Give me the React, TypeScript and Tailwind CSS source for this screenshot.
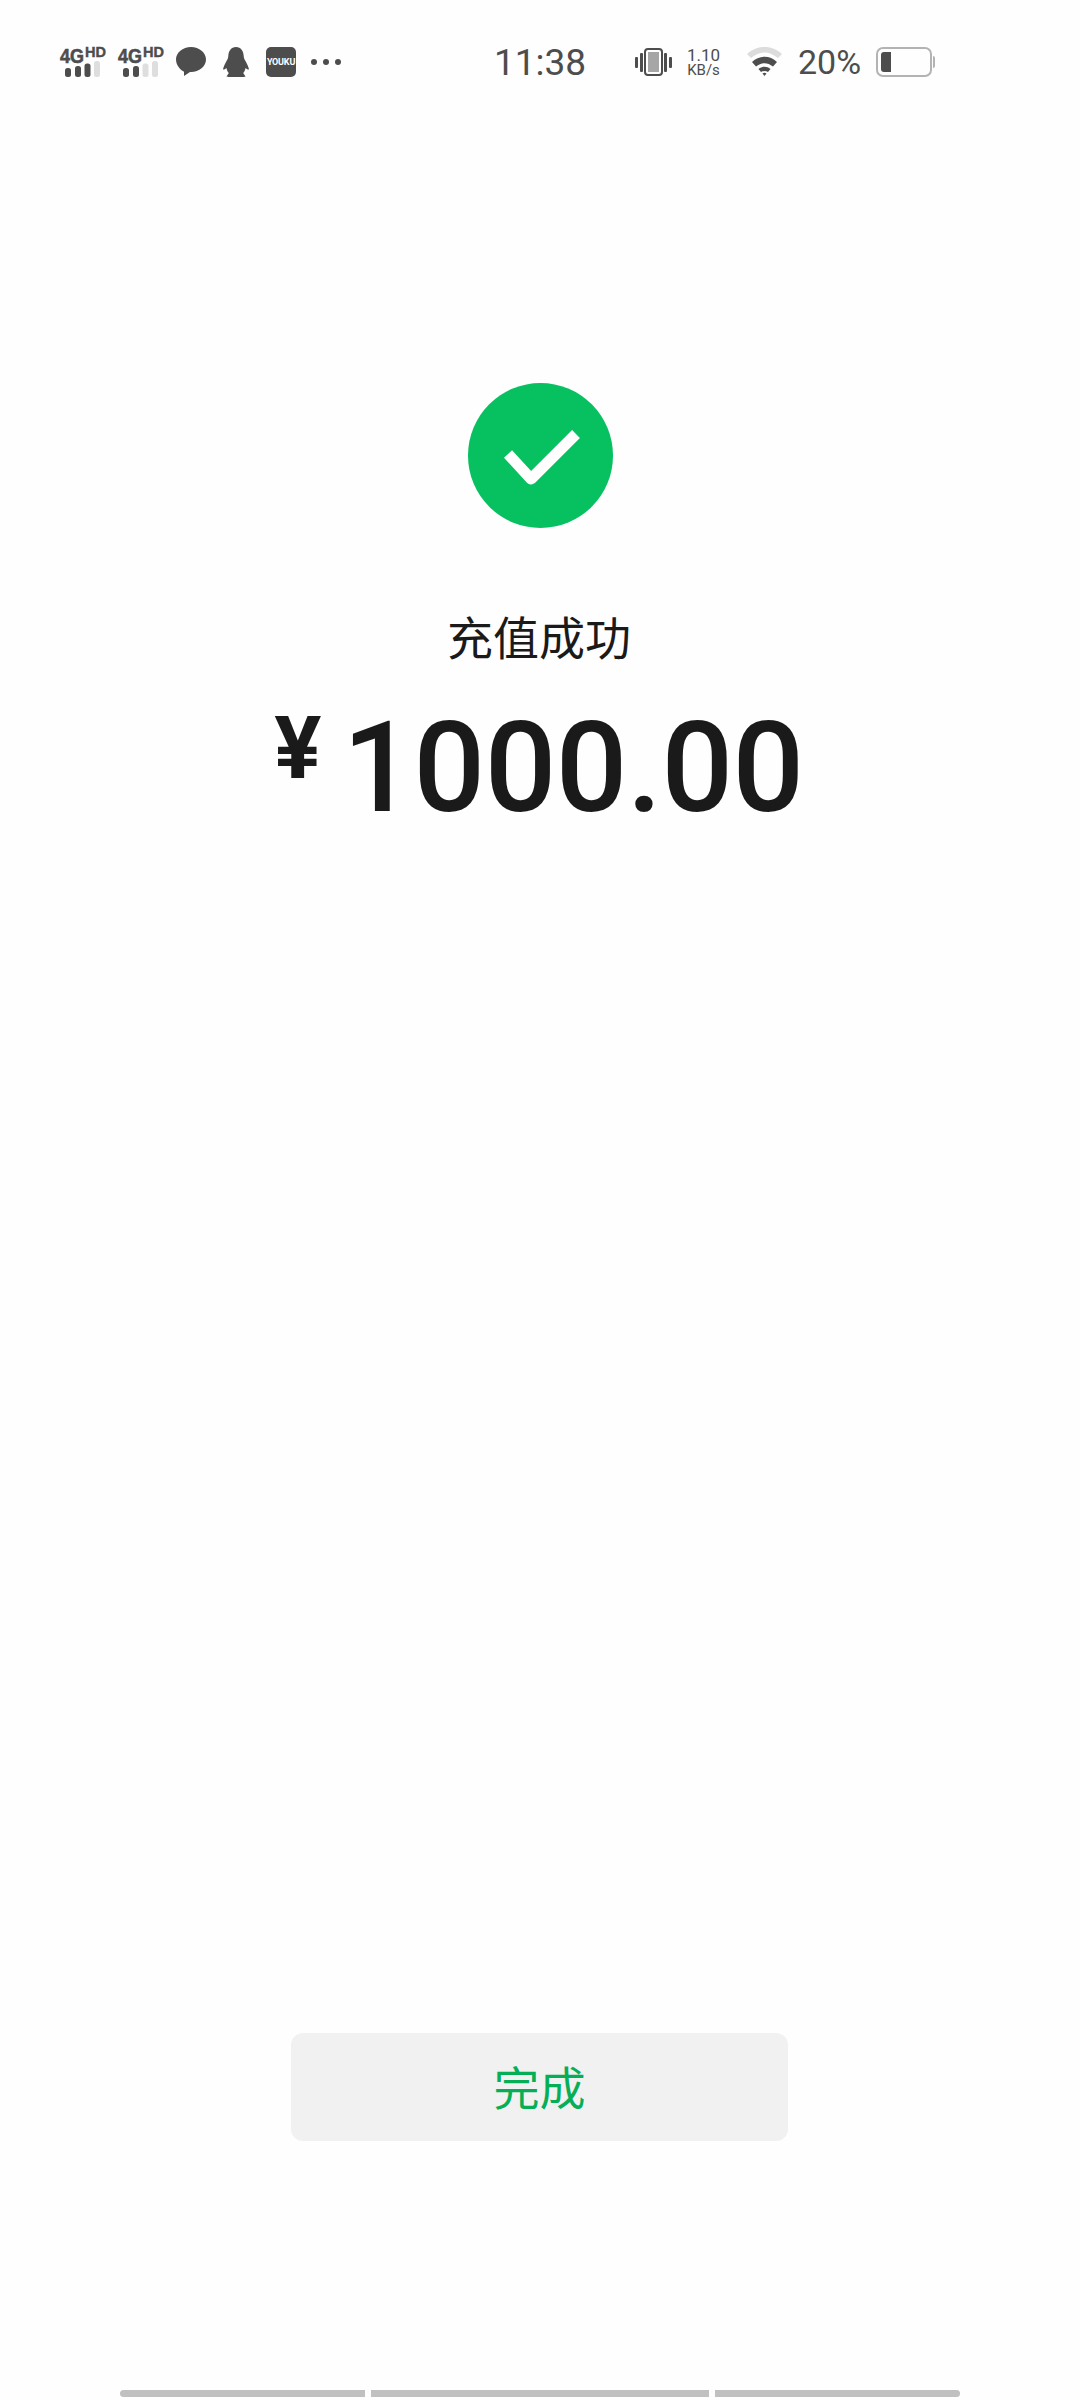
import React from "react";

const sans = "font-['Roboto','Noto_Sans_CJK_SC',sans-serif]";

function Signal({ filled }: { filled: number }) {
  const bars = [
    { x: 5, y: 21, h: 9 },
    { x: 15, y: 19, h: 11 },
    { x: 24.5, y: 16.5, h: 13.5 },
    { x: 34, y: 14, h: 16 },
  ];
  return (
    <svg className="overflow-visible" width="46" height="30" viewBox="0 0 46 30">
      <text x="0" y="15.500" fontFamily="Liberation Sans" fontWeight="700" fontSize="21" textLength="24" lengthAdjust="spacingAndGlyphs" fill="#4d4d4d" stroke="#4d4d4d" strokeWidth="0.6">4G</text>
      <text x="25" y="10" fontFamily="Liberation Sans" fontWeight="700" fontSize="14" textLength="21" lengthAdjust="spacingAndGlyphs" fill="#4d4d4d" stroke="#4d4d4d" strokeWidth="0.4">HD</text>
      {bars.map((b, i) => (
        <rect key={i} x={b.x} y={b.y} width="6" height={b.h} rx="2.5" fill={i < filled ? "#4d4d4d" : "#dedede"} />
      ))}
    </svg>
  );
}

function StatusBar() {
  return (
    <div className={`flex items-center h-[30px] mt-[47px] pl-[60px] text-[#4d4d4d] ${sans}`}>
      <Signal filled={3} />
      <div className="ml-[12px]">
        <Signal filled={2} />
      </div>
      {/* message */}
      <svg className="ml-[12px]" width="30" height="30" viewBox="0 0 30 30">
        <path d="M15 0C6.700 0 0 5.600 0 12.500c0 6.300 5.200 11 8 12.200L8 29l6-4h1c8.300 0 15-5.600 15-12.500S23.300 0 15 0z" fill="#4d4d4d" />
      </svg>
      {/* qq */}
      <svg className="ml-[17px]" width="26" height="30" viewBox="0 0 26 30">
        <path d="M13 0c5 0 7.500 4 7.700 9 .1 2 .6 3 1.800 5 1.500 2.700 3.300 6.500 3.500 8.500-1 .3-2.700-.6-3.500-1.500-.3 2-1 3.700-2.300 5l2.300 3.500c-.5.3-1.500.5-3 .5H6.500c-1.500 0-2.500-.2-3-.5L5.800 26c-1.300-1.300-2-3-2.300-5-.8.9-2.500 1.800-3.500 1.500.2-2 2-5.800 3.500-8.500 1.200-2 1.700-3 1.800-5C5.500 4 8 0 13 0z" fill="#4d4d4d" />
      </svg>
      {/* youku */}
      <div className="ml-[17px] w-[30px] h-[30px] rounded-[5px] bg-[#4d4d4d] flex items-center justify-center text-white text-[9px] font-bold leading-none tracking-[-0.2px]">
        YOUKU
      </div>
      <div className="ml-[15px] flex gap-[6px]">
        <span className="w-[6px] h-[6px] rounded-full bg-[#4d4d4d]" />
        <span className="w-[6px] h-[6px] rounded-full bg-[#4d4d4d]" />
        <span className="w-[6px] h-[6px] rounded-full bg-[#4d4d4d]" />
      </div>
      <span className="ml-[153px] w-[93px] text-[37px] leading-none whitespace-nowrap">11:38</span>
      {/* vibrate */}
      <svg className="ml-[48px]" width="37" height="28" viewBox="0 0 37 28">
        <rect x="0" y="9" width="3" height="11" rx="1" fill="#4d4d4d" />
        <rect x="5" y="5" width="3" height="19" rx="1" fill="#4d4d4d" />
        <rect x="29" y="5" width="3" height="19" rx="1" fill="#4d4d4d" />
        <rect x="34" y="9" width="3" height="11" rx="1" fill="#4d4d4d" />
        <rect x="10" y="1" width="17" height="26" rx="3" fill="#fff" stroke="#4d4d4d" strokeWidth="2" />
        <rect x="13" y="4" width="11" height="20" fill="#a6a6a6" />
      </svg>
      <div className="ml-[15px] flex flex-col items-center w-[33px] text-[17px] leading-[16px]">
        <span>1.10</span>
        <span className="text-[15px] leading-[15px]">KB/s</span>
      </div>
      {/* wifi */}
      <svg className="ml-[27px]" width="35" height="30" viewBox="0 0 35 30">
        <path d="M0 7C10-2.500 25-2.500 35 7l-4 4C22 3.500 13 3.500 4 11z" fill="#dcdcdc" />
        <path d="M5 15c7-7 18-7 25 0l-4 4.500c-5.500-4.500-11.500-4.500-17 0z" fill="#4d4d4d" />
        <path d="M11.500 22c3.500-3 8.500-3 12 0l-2.500 3c-2-1.500-5-1.500-7 0z" fill="#4d4d4d" />
        <path d="M15.500 26.500c1.500-1 2.500-1 4 0l-2 2.500z" fill="#4d4d4d" />
      </svg>
      <span className="ml-[16px] w-[63px] text-[34px] leading-none whitespace-nowrap">20%</span>
      {/* battery */}
      <div className="ml-[15px] flex items-center">
        <div className="w-[56px] h-[30px] rounded-[7px] border-2 border-[#b3b3b3] p-[3px]">
          <div className="w-[10px] h-full rounded-l-[3px] bg-[#4d4d4d]" />
        </div>
        <div className="ml-[1px] w-[2px] h-[12px] rounded-r-sm bg-[#b3b3b3]" />
      </div>
    </div>
  );
}

export default function App() {
  return (
    <div className={`w-[1080px] h-[2400px] bg-[#fefefe] flex flex-col items-center ${sans}`}>
      <div className="w-full">
        <StatusBar />
      </div>

      {/* Success icon */}
      <div className="mt-[306px] w-[145px] h-[145px] rounded-full bg-[#07c160] flex items-center justify-center">
        <svg width="80" height="60" viewBox="0 0 80 60">
          <path d="M8 28 L31 53 L76 8" fill="none" stroke="#fff" strokeWidth="11" strokeLinejoin="round" />
        </svg>
      </div>

      <div className="mt-[84px] mr-[2px] text-[46px] leading-[54px] text-[#1a1a1a]">充值成功</div>

      <div className="mt-[27px] mr-[2px] flex items-start text-[#1a1a1a] font-medium">
        <span className="text-[88px] leading-[110px] font-bold mr-[21px]">¥</span>
        <span className="text-[126px] leading-[150px] tracking-[-0.5px]">1000.00</span>
      </div>

      {/* Done button */}
      <div className="mt-auto mr-[1px] w-[497px] h-[108px] pt-[4px] rounded-[12px] bg-[#f1f1f1] flex items-center justify-center text-[46px] text-[#06ae56]">
        完成
      </div>

      {/* Home gesture segments */}
      <div className="mt-[249px] mb-[3px] flex gap-[6px]">
        <div className="w-[245px] h-[7px] rounded-l-[4px] bg-[#c0c0c0]" />
        <div className="w-[338px] h-[7px] bg-[#c0c0c0]" />
        <div className="w-[245px] h-[7px] rounded-r-[4px] bg-[#c0c0c0]" />
      </div>
    </div>
  );
}
